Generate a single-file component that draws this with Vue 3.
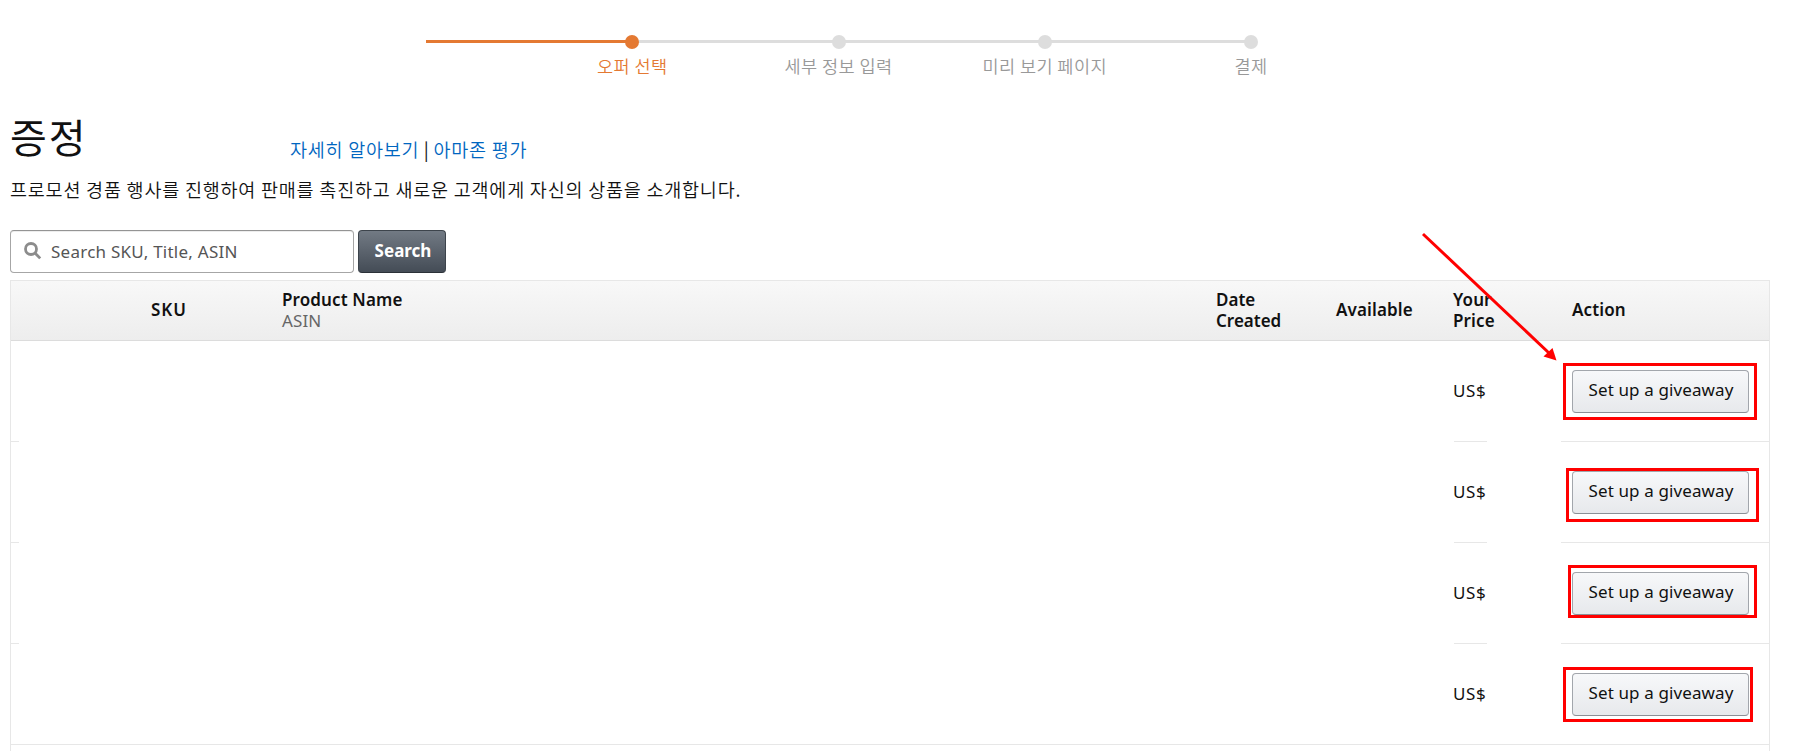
<template>
  <div class="page">
    <ol class="steps">
      <li
        v-for="(step, index) in steps"
        :key="step"
        class="steps__item"
        :class="{ 'steps__item--active': index === 0 }"
      >
        <span class="steps__line"></span>
        <span class="steps__dot"></span>
        <span class="steps__label">{{ step }}</span>
      </li>
    </ol>

    <header class="heading">
      <h1 class="heading__title">증정</h1>
      <nav class="heading__links">
        <a class="heading__link">자세히 알아보기</a>
        <span class="heading__divider">|</span>
        <a class="heading__link">아마존 평가</a>
      </nav>
    </header>
    <p class="description">프로모션 경품 행사를 진행하여 판매를 촉진하고 새로운 고객에게 자신의 상품을 소개합니다.</p>

    <form class="search" @submit.prevent>
      <label class="search__field">
        <svg class="search__icon" viewBox="0 0 18 18">
          <circle cx="7" cy="7" r="5.5" />
          <path d="M11.2 11.2 L16.2 16.4" />
        </svg>
        <input v-model="query" class="search__input" type="text" placeholder="Search SKU, Title, ASIN" />
      </label>
      <button class="search__button" type="submit">Search</button>
    </form>

    <section class="offers">
      <div class="offers__head">
        <span class="offers__sku">SKU</span>
        <span class="offers__name">Product Name<small>ASIN</small></span>
        <span class="offers__date">Date<br />Created</span>
        <span class="offers__available">Available</span>
        <span class="offers__your-price">Your<br />Price</span>
        <span class="offers__your-action">Action</span>
      </div>
      <div v-for="n in 4" :key="n" class="offers__row">
        <span class="offers__edge"></span>
        <span class="offers__price">US$</span>
        <span class="offers__action">
          <button class="offers__button" type="button">Set up a giveaway</button>
        </span>
      </div>
    </section>

    <svg class="marks" viewBox="0 0 1798 751">
      <rect
        v-for="mark in marks"
        :key="mark.y"
        :x="mark.x"
        :y="mark.y"
        :width="mark.width"
        :height="mark.height"
      />
      <path class="marks__line" d="M1423 234 L1549 353" />
      <path class="marks__tip" d="M1556.5 360.5 L1543.5 356.5 L1552.5 348 Z" />
    </svg>
  </div>
</template>

<script setup>
import { ref } from 'vue'

const query = ref('')

const steps = ['오퍼 선택', '세부 정보 입력', '미리 보기 페이지', '결제']

const marks = [
  { x: 1564.5, y: 364.5, width: 191, height: 54 },
  { x: 1567.5, y: 469.5, width: 190, height: 51 },
  { x: 1569.5, y: 566.5, width: 186, height: 50 },
  { x: 1564.5, y: 668.5, width: 187, height: 52 }
]
</script>

<style>
body {
  margin: 0;
  background: #fff;
}
</style>

<style scoped>
.page {
  position: relative;
  box-sizing: border-box;
  width: 1798px;
  height: 751px;
  padding: 35px 28px 0 10px;
  overflow: hidden;
  color: #111;
  font-family: "Noto Sans", "Noto Sans CJK KR", sans-serif;
  font-size: 17px;
}

.steps {
  display: flex;
  width: 825px;
  height: 75px;
  margin: 0 0 0 416px;
  padding: 0;
  list-style: none;
}

.steps__item {
  display: grid;
  flex: 1;
  grid-template-columns: 1fr;
  grid-template-rows: 14px 24px;
  row-gap: 1px;
  color: #999;
}

.steps__line {
  grid-area: 1 / 1;
  height: 3px;
  margin-top: 5px;
  background: #ddd;
}

.steps__dot {
  grid-area: 1 / 1;
  justify-self: end;
  width: 14px;
  height: 14px;
  margin-right: -7px;
  border-radius: 50%;
  background: #ddd;
  z-index: 1;
}

.steps__label {
  grid-area: 2 / 1;
  justify-self: end;
  width: 200px;
  margin-right: -100px;
  font-family: "Noto Sans CJK KR", sans-serif;
  font-size: 17.5px;
  font-weight: 350;
  letter-spacing: 0.45px;
  line-height: 31px;
  text-align: center;
  white-space: nowrap;
}

.steps__item--active {
  color: #e47932;
}

.steps__item--active .steps__line,
.steps__item--active .steps__dot {
  background: #e47932;
}

.heading {
  display: flex;
  height: 62px;
}

.heading__title {
  width: 280px;
  margin: 0;
  font-family: "Noto Sans CJK KR", sans-serif;
  font-size: 40px;
  font-weight: 400;
  letter-spacing: 2px;
  line-height: 53px;
}

.heading__links {
  font-family: "Noto Sans CJK KR", sans-serif;
  font-size: 18.5px;
  font-weight: 350;
  letter-spacing: 0.75px;
  line-height: 78px;
  white-space: nowrap;
}

.heading__link {
  color: #0066c0;
}

.heading__divider {
  margin: 0 -1px 0 -0.5px;
  padding: 0 5px;
  font-weight: 400;
}

.description {
  height: 36px;
  margin: 0 0 22px;
  font-family: "Noto Sans CJK KR", sans-serif;
  font-size: 18.5px;
  font-weight: 350;
  letter-spacing: 0.78px;
  line-height: 34px;
  white-space: nowrap;
}

.search {
  display: flex;
  gap: 4px;
  height: 43px;
  margin-bottom: 7px;
}

.search__field {
  display: flex;
  box-sizing: border-box;
  align-items: center;
  width: 344px;
  padding: 0 13px;
  border: 1px solid #a6a6a6;
  border-top-color: #949494;
  border-radius: 4px;
  box-shadow: inset 0 1px 0 rgba(0, 0, 0, 0.07);
}

.search__icon {
  width: 18px;
  height: 18px;
  margin: 0 9px 2px 0;
  fill: none;
  stroke: #8c8c8c;
  stroke-width: 2.8;
}

.search__input {
  flex: 1;
  min-width: 0;
  padding: 0;
  border: 0;
  outline: 0;
  background: none;
  font: inherit;
  letter-spacing: 0.25px;
}

.search__input::placeholder {
  color: #555;
}

.search__button {
  width: 88px;
  padding: 0 0 2px 2px;
  border: 1px solid #3d444c;
  border-bottom-color: #2b3138;
  border-radius: 4px;
  background: linear-gradient(#727a84, #444c56);
  color: #fff;
  font: inherit;
  font-weight: 700;
}

.offers {
  height: 480px;
  border: 1px solid #e7e7e7;
}

.offers__head {
  display: grid;
  box-sizing: border-box;
  grid-template-columns: 131px 934px 120px 117px 119px 1fr;
  align-items: center;
  height: 60px;
  padding: 0 0 2px 140px;
  border-bottom: 1px solid #dcdcdc;
  background: linear-gradient(#f8f8f8, #ededed);
  font-weight: 600;
  letter-spacing: 0.12px;
  line-height: 21px;
}

.offers__sku {
  letter-spacing: 0.9px;
}

.offers__date {
  letter-spacing: 0;
}

.offers__name small {
  display: block;
  color: #666;
  font-size: 17px;
  font-weight: 400;
}

.offers__row {
  display: flex;
  box-sizing: border-box;
  justify-content: space-between;
  height: 101px;
}

.offers__row:last-child {
  border-bottom: 1px solid #e7e7e7;
}

.offers__edge,
.offers__price,
.offers__action {
  display: flex;
  box-sizing: border-box;
  align-items: center;
  border-bottom: 1px solid #e7e7e7;
}

.offers__row:last-child > span {
  border-bottom: 0;
}

.offers__edge {
  width: 8px;
}

.offers__price {
  width: 33px;
  margin: 0 74px 0 auto;
  padding-bottom: 2px;
  letter-spacing: 0.6px;
  text-indent: -1px;
}

.offers__action {
  width: 208px;
  padding-left: 11px;
}

.offers__button {
  width: 177px;
  height: 43px;
  padding: 0 0 4px 1px;
  border: 1px solid #a2a6ac;
  border-bottom-color: #8b8f96;
  border-radius: 4px;
  background: linear-gradient(#f7f8fa, #e7e9ec);
  color: #111;
  font: inherit;
  letter-spacing: 0.12px;
  white-space: nowrap;
}

/* callouts drawn over the action column */
.marks {
  position: absolute;
  top: 0;
  left: 0;
  width: 1798px;
  height: 751px;
  fill: none;
  stroke: #f00;
  stroke-width: 3;
  pointer-events: none;
}

.marks__tip {
  fill: #f00;
  stroke: none;
}
</style>
